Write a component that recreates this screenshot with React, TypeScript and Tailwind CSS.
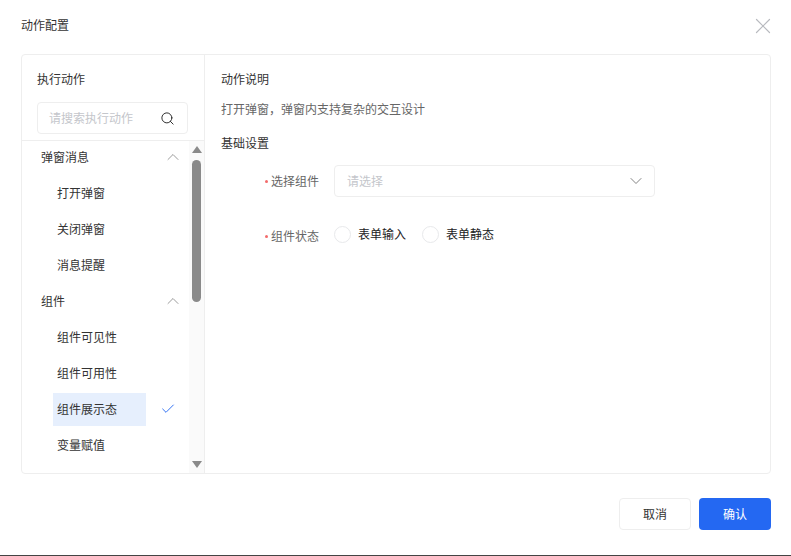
import { Check, ChevronDown, ChevronUp, Search, X } from "lucide-react";

const font = "font-['Noto_Sans_CJK_SC','Noto_Sans_CJK_JP',sans-serif]";

function GroupRow({ label }: { label: string }) {
  return (
    <div className="flex h-9 items-center justify-between pl-[19px] pr-[6px] text-[#333]">
      <span>{label}</span>
      <ChevronUp className="h-5 w-5 text-[#888]" strokeWidth={1} />
    </div>
  );
}

function ItemRow({ label, active }: { label: string; active?: boolean }) {
  return (
    <div className="flex h-9 items-center pl-[31px] pr-[13px] text-[#333]">
      <div
        className={`flex h-[33px] w-[93px] items-center pl-1 ${active ? "bg-[#e6effd]" : ""}`}
      >
        {label}
      </div>
      {active && <Check className="ml-auto h-4 w-4 text-[#2468f2]" strokeWidth={1.4} />}
    </div>
  );
}

function Radio({ label }: { label: string }) {
  return (
    <div className="flex items-center gap-[7px]">
      <span className="h-[17px] w-[17px] rounded-full border border-[#e8e9eb] bg-white" />
      <span className="text-[#222]">{label}</span>
    </div>
  );
}

function FieldLabel({ label }: { label: string }) {
  return (
    <div className="flex w-[98px] items-center justify-end text-[#666]">
      <span className="mr-[3px] h-[3px] w-[3px] rounded-full bg-[#f36b6b]" />
      {label}
    </div>
  );
}

export default function App() {
  return (
    <div className={`flex h-[556px] w-[791px] flex-col border-b border-[#444] bg-white text-xs ${font}`}>
      <div className="flex h-[54px] shrink-0 items-start justify-between pl-[21px] pr-[15px] pt-[17px]">
        <span className="leading-4 text-[#333]">动作配置</span>
        <X className="-mt-1 h-[26px] w-[26px] text-[#b8babf]" strokeWidth={1.1} />
      </div>

      <div className="ml-[21px] mr-5 flex h-[420px] shrink-0 rounded border border-[#eeeeee]">
        <div className="flex w-[183px] shrink-0 flex-col border-r border-[#eeeeee]">
          <div className="h-[86px] shrink-0 border-b border-[#eeeeee] px-[15px] pt-4">
            <div className="leading-4 text-[#333]">执行动作</div>
            <div className="mt-[15px] flex h-8 w-[151px] items-center justify-between rounded border border-[#eeeeee] pl-[11px] pr-3">
              <span className="text-[#c4c6cb]">请搜索执行动作</span>
              <Search className="h-[15px] w-[15px] text-[#222]" strokeWidth={1.5} />
            </div>
          </div>
          <div className="flex min-h-0 flex-1">
            <div className="-mt-[2px] min-w-0 flex-1 overflow-hidden">
              <GroupRow label="弹窗消息" />
              <ItemRow label="打开弹窗" />
              <ItemRow label="关闭弹窗" />
              <ItemRow label="消息提醒" />
              <GroupRow label="组件" />
              <ItemRow label="组件可见性" />
              <ItemRow label="组件可用性" />
              <ItemRow label="组件展示态" active />
              <ItemRow label="变量赋值" />
            </div>
            <div className="flex w-[15px] shrink-0 flex-col items-center bg-[#fafafa]">
              <span className="mt-[5px] h-0 w-0 border-x-[5px] border-b-[7px] border-x-transparent border-b-[#8a8a8a]" />
              <div className="mt-[7px] h-[142px] w-[9px] rounded-full bg-[#8a8a8a]" />
              <span className="mt-auto mb-[5px] h-0 w-0 border-x-[5px] border-t-[7px] border-x-transparent border-t-[#8a8a8a]" />
            </div>
          </div>
        </div>

        <div className="min-w-0 flex-1 pl-4 pt-4">
          <div className="leading-4 text-[#333]">动作说明</div>
          <div className="mt-[14px] leading-4 text-[#666]">打开弹窗，弹窗内支持复杂的交互设计</div>
          <div className="mt-[18px] leading-4 text-[#333]">基础设置</div>

          <div className="mt-[14px] flex items-center gap-[15px]">
            <FieldLabel label="选择组件" />
            <div className="flex h-8 w-[321px] items-center justify-between rounded border border-[#eeeeee] pl-3 pr-2">
              <span className="text-[#c4c6cb]">请选择</span>
              <ChevronDown className="h-5 w-5 text-[#777]" strokeWidth={1.1} />
            </div>
          </div>

          <div className="mt-[27px] flex items-center gap-[15px]">
            <div className="mt-1">
              <FieldLabel label="组件状态" />
            </div>
            <div className="flex gap-4">
              <Radio label="表单输入" />
              <Radio label="表单静态" />
            </div>
          </div>
        </div>
      </div>

      <div className="flex justify-end gap-2 pr-5 pt-6">
        <button className="h-8 w-[72px] rounded border border-[#eeeeee] bg-white text-[#333]">取消</button>
        <button className="h-8 w-[72px] rounded bg-[#2468f2] text-white">确认</button>
      </div>
    </div>
  );
}
